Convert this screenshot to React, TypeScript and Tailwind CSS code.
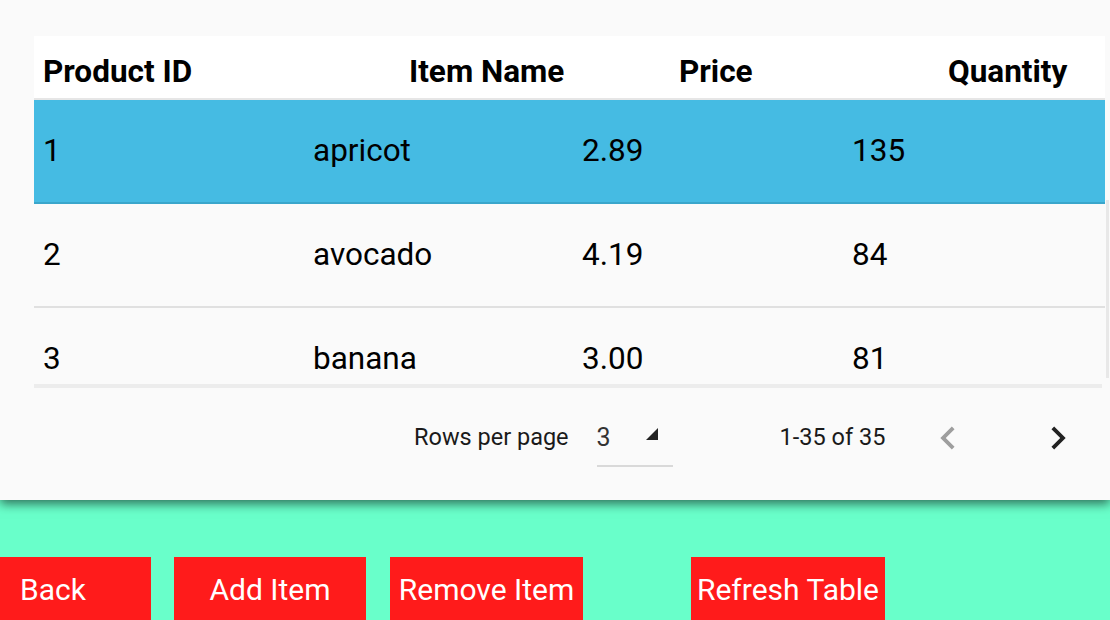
import { MdChevronLeft, MdChevronRight } from 'react-icons/md';

const rows = [
  { id: 1, name: 'apricot', price: '2.89', qty: 135 },
  { id: 2, name: 'avocado', price: '4.19', qty: 84 },
  { id: 3, name: 'banana', price: '3.00', qty: 81 },
];

export default function App() {
  const selected = 1;

  return (
    <div className="h-[620px] w-[1110px] overflow-hidden bg-[#69ffca] font-['Roboto',sans-serif] text-black">
      {/* Table panel */}
      <div className="relative z-10 h-[500px] bg-[#fafafa] pt-[36px] pl-[34px] shadow-[0_4px_10px_rgba(0,0,0,0.55)]">
        <div className="flex h-[352px]">
          <div className="flex w-[1071px] flex-col">
            <div className="h-[348px] overflow-hidden">
              {/* Header */}
              <div className="grid h-[64px] grid-cols-[270px_269px_270px_262px] items-center border-b-2 border-[#e6e6e6] bg-white pt-[9px] text-[31.5px] font-bold">
                <div className="pl-[9px]">Product ID</div>
                <div className="pl-[105px]">Item Name</div>
                <div className="pl-[106px]">Price</div>
                <div className="pl-[105px]">Quantity</div>
              </div>

              {/* Rows */}
              {rows.map((r) => (
                <div
                  key={r.id}
                  className={`grid h-[104px] grid-cols-[270px_269px_270px_262px] items-center border-b-2 text-[31.5px] ${
                    r.id === selected ? 'border-[#3aa6cb] bg-[#45bbe3]' : 'border-[#e0e0e0] bg-[#fafafa]'
                  }`}
                >
                  <div className="pl-[9px]">{r.id}</div>
                  <div className="pl-[9px]">{r.name}</div>
                  <div className="pl-[9px]">{r.price}</div>
                  <div className="pl-[9px]">{r.qty}</div>
                </div>
              ))}
            </div>
            {/* horizontal scrollbar */}
            <div className="h-[4px] w-[1068px] bg-[#ececec]" />
          </div>
          {/* vertical scrollbar */}
          <div className="ml-[1px] mt-[164px] h-[178px] w-[3px] bg-[#e8e8e8]" />
        </div>

        {/* Pagination */}
        <div className="flex h-[96px] items-center pt-[3px] text-[23.5px] text-[#1a1a1a]">
          <span className="ml-[380px]">Rows per page</span>
          <div className="ml-[28px] mt-[8px] flex h-[50px] w-[76px] items-center justify-between border-b-2 border-[#d9d9d9] pb-[6px]">
            <span className="text-[25px] text-[#333]">3</span>
            <svg width="14" height="14" viewBox="0 0 14 14" className="mr-[14px] mb-[8px]">
              <path d="M13 1 L13 13 L1 13 Z" fill="#222" />
            </svg>
          </div>
          <span className="ml-[107px]">1-35 of 35</span>
          <MdChevronLeft size={46} className="ml-[40px] text-[#9e9e9e]" />
          <MdChevronRight size={46} className="ml-[64px] text-[#222]" />
        </div>
      </div>

      {/* Buttons */}
      <div className="flex pt-[57px] text-[30px] text-white">
        <button className="flex h-[64px] w-[151px] items-center bg-[#ff1b1b] pl-[20px]">Back</button>
        <button className="ml-[23px] flex h-[64px] w-[192px] items-center justify-center bg-[#ff1b1b]">Add Item</button>
        <button className="ml-[24px] flex h-[64px] w-[193px] items-center justify-center bg-[#ff1b1b]">Remove Item</button>
        <button className="ml-[108px] flex h-[64px] w-[194px] items-center justify-center bg-[#ff1b1b]">Refresh Table</button>
      </div>
    </div>
  );
}
